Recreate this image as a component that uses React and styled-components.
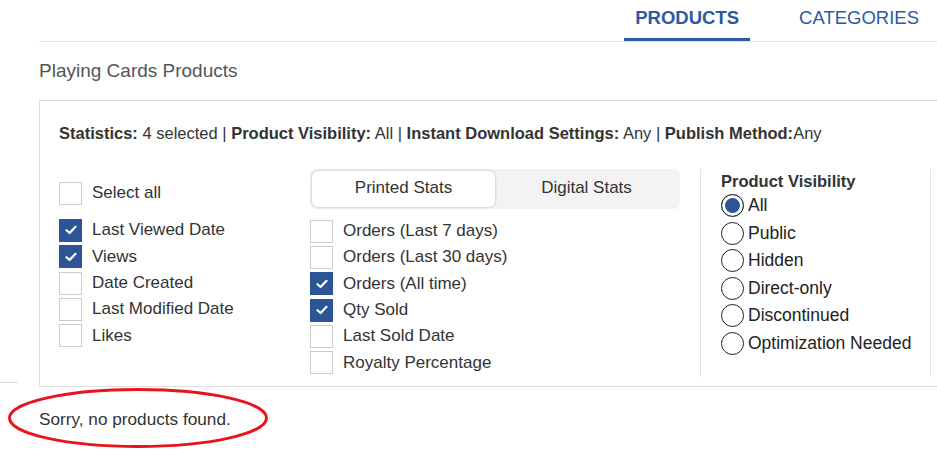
import React from 'react';
import styled, { createGlobalStyle } from 'styled-components';

const GlobalStyle = createGlobalStyle`
  html, body {
    margin: 0;
    padding: 0;
    background: #fff;
    overflow: hidden;
  }
  body {
    font-family: "Liberation Sans", Arial, sans-serif;
    color: #333;
  }
`;

const statsLeft = [
  { label: 'Last Viewed Date', checked: true },
  { label: 'Views', checked: true },
  { label: 'Date Created', checked: false },
  { label: 'Last Modified Date', checked: false },
  { label: 'Likes', checked: false },
];

const statsPrinted = [
  { label: 'Orders (Last 7 days)', checked: false },
  { label: 'Orders (Last 30 days)', checked: false },
  { label: 'Orders (All time)', checked: true },
  { label: 'Qty Sold', checked: true },
  { label: 'Last Sold Date', checked: false },
  { label: 'Royalty Percentage', checked: false },
];

const visibility = ['All', 'Public', 'Hidden', 'Direct-only', 'Discontinued', 'Optimization Needed'];

const Check = ({ checked }) => (
  <Box checked={checked}>
    {checked && (
      <svg width="12" height="10" viewBox="0 0 12 10">
        <path d="M1.5 5.2 L4.6 8 L10.5 1.8" fill="none" stroke="#fff" strokeWidth="2.2" strokeLinecap="round" strokeLinejoin="round" />
      </svg>
    )}
  </Box>
);

const CheckItem = ({ label, checked }) => (
  <CheckRow>
    <Check checked={checked} />
    <span>{label}</span>
  </CheckRow>
);

const App = () => {
  return (
    <Page>
      <GlobalStyle />
      <TabBar>
        <Tab active>PRODUCTS</Tab>
        <Tab>CATEGORIES</Tab>
      </TabBar>
      <Title>Playing Cards Products</Title>
      <FilterPanel>
        <Summary>
          <b>Statistics:</b> 4 selected | <b>Product Visibility:</b> All | <b>Instant Download Settings:</b> Any | <b>Publish Method:</b>Any
        </Summary>
        <Columns>
          <LeftColumn>
            <SelectAll>
              <Check checked={false} />
              <span>Select all</span>
            </SelectAll>
            {statsLeft.map((item) => (
              <CheckItem key={item.label} {...item} />
            ))}
          </LeftColumn>
          <MiddleColumn>
            <Segmented>
              <Segment active>Printed Stats</Segment>
              <Segment>Digital Stats</Segment>
            </Segmented>
            {statsPrinted.map((item) => (
              <CheckItem key={item.label} {...item} />
            ))}
          </MiddleColumn>
          <RightColumn>
            <GroupTitle>Product Visibility</GroupTitle>
            {visibility.map((v, idx) => (
              <RadioRow key={v}>
                <Radio selected={idx === 0} />
                <span>{v}</span>
              </RadioRow>
            ))}
          </RightColumn>
        </Columns>
        <Stub />
      </FilterPanel>
      <EmptyNote>
        Sorry, no products found.
        <Circle viewBox="0 0 262 62" preserveAspectRatio="none">
          <ellipse cx="131" cy="31" rx="128.5" ry="28.5" fill="none" stroke="#e8141c" strokeWidth="3" />
        </Circle>
      </EmptyNote>
    </Page>
  );
};

export default App;

const Page = styled.div`
  width: 937px;
  height: 453px;
  overflow: hidden;
`;

const TabBar = styled.div`
  display: flex;
  justify-content: flex-end;
  margin-left: 39px;
  height: 41px;
  border-bottom: 1px solid #e3e3e3;
  padding-right: 7px;
`;

const Tab = styled.div`
  box-sizing: border-box;
  height: 41px;
  padding: 7px 11px 0;
  margin-left: 38px;
  font-size: 18.5px;
  font-weight: ${(p) => (p.active ? 700 : 400)};
  color: #2b5b9f;
  border-bottom: 3px solid ${(p) => (p.active ? '#2b5b9f' : 'transparent')};
`;

const Title = styled.div`
  margin: 18px 0 0 39px;
  font-size: 19px;
  color: #555;
  line-height: 22px;
`;

const FilterPanel = styled.div`
  position: relative;
  box-sizing: border-box;
  margin: 18px -20px 0 39px;
  height: 287px;
  border: 1px solid #dedede;
  padding: 22px 0 0 19px;
`;

const Summary = styled.div`
  font-size: 16.5px;
  line-height: 20px;
  color: #333;
  b {
    font-weight: 700;
  }
`;

const Columns = styled.div`
  display: flex;
  margin-top: 26px;
`;

const LeftColumn = styled.div`
  width: 251px;
  display: flex;
  flex-direction: column;
`;

const MiddleColumn = styled.div`
  width: 370px;
  display: flex;
  flex-direction: column;
`;

const RightColumn = styled.div`
  margin-left: 20px;
  width: 209px;
  height: 208px;
  border-left: 1px solid #e3e3e3;
  border-right: 1px solid #e3e3e3;
  padding-left: 20px;
  display: flex;
  flex-direction: column;
`;

const CheckRow = styled.div`
  display: flex;
  align-items: center;
  gap: 10px;
  height: 26.3px;
  font-size: 17px;
  color: #333;
`;

const SelectAll = styled(CheckRow)`
  margin: 11px 0 11px;
`;

const Box = styled.span`
  box-sizing: border-box;
  width: 23px;
  height: 23px;
  flex: none;
  display: inline-flex;
  align-items: center;
  justify-content: center;
  border: 1px solid ${(p) => (p.checked ? '#2b5597' : '#ccc')};
  background: ${(p) => (p.checked ? '#2b5597' : '#fff')};
`;

const Segmented = styled.div`
  display: flex;
  width: 370px;
  height: 40px;
  box-sizing: border-box;
  padding: 2px;
  background: #f3f3f3;
  border-radius: 6px;
  margin-bottom: 9px;
`;

const Segment = styled.div`
  flex: 1;
  display: flex;
  align-items: center;
  justify-content: center;
  padding-bottom: 2px;
  font-size: 17px;
  color: #333;
  border-radius: 6px;
  background: ${(p) => (p.active ? '#fff' : 'transparent')};
  box-shadow: ${(p) => (p.active ? '0 0 3px rgba(0,0,0,0.25)' : 'none')};
`;

const GroupTitle = styled.div`
  font-size: 16.5px;
  font-weight: 700;
  line-height: 22px;
  margin-top: 1px;
  color: #333;
`;

const RadioRow = styled.div`
  display: flex;
  align-items: center;
  gap: 4px;
  height: 27.5px;
  font-size: 17.5px;
  color: #222;
`;

const Radio = styled.span`
  box-sizing: border-box;
  width: 23px;
  height: 23px;
  flex: none;
  border-radius: 50%;
  border: 1.5px solid #222;
  background: ${(p) => (p.selected ? '#2b5597' : '#fff')};
  box-shadow: ${(p) => (p.selected ? 'inset 0 0 0 3px #fff' : 'none')};
`;

const Stub = styled.div`
  position: absolute;
  left: -40px;
  bottom: 3px;
  width: 18px;
  border-top: 1px solid #dedede;
`;

const EmptyNote = styled.div`
  position: relative;
  margin: 22px 0 0 39px;
  font-size: 17.2px;
  line-height: 20px;
  color: #333;
`;

const Circle = styled.svg`
  position: absolute;
  left: -32px;
  top: -22px;
  width: 262px;
  height: 62px;
  overflow: visible;
`;
